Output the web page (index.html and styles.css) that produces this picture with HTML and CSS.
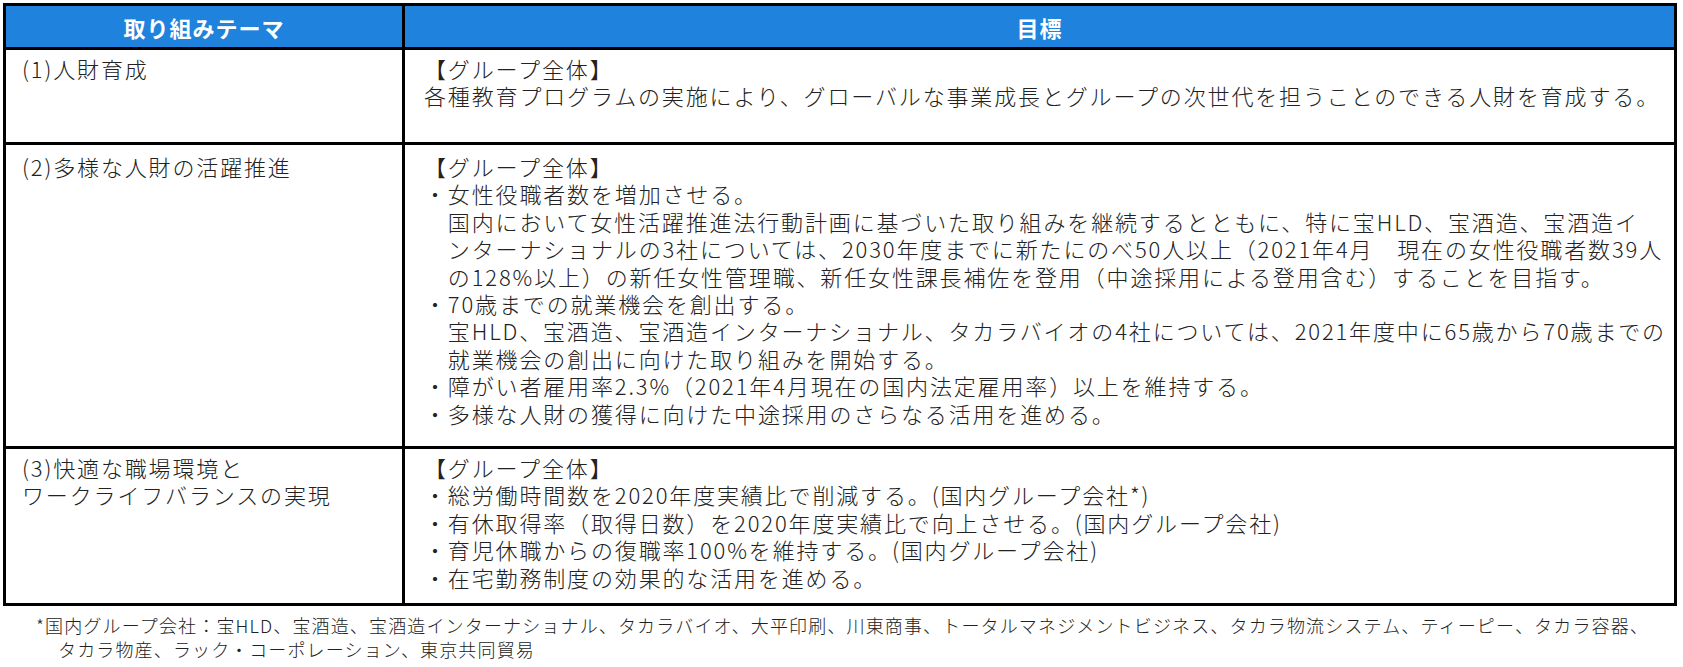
FILE: index.html
```html
<!DOCTYPE html>
<html lang="ja">
<head>
<meta charset="utf-8">
<title>取り組みテーマと目標</title>
<link rel="stylesheet" href="styles.css">
</head>
<body>
<div class="sheet">
  <div class="grid">
    <div class="hd">取り組みテーマ</div>
    <div class="hd">目標</div>

    <div class="cell theme">
      <div class="ln">(1)人財育成</div>
    </div>
    <div class="cell goal">
      <div class="ln">【グループ全体】</div>
      <div class="ln">各種教育プログラムの実施により、グローバルな事業成長とグループの次世代を担うことのできる人財を育成する。</div>
    </div>

    <div class="cell theme row2">
      <div class="ln">(2)多様な人財の活躍推進</div>
    </div>
    <div class="cell goal row2">
      <div class="ln">【グループ全体】</div>
      <div class="ln">・女性役職者数を増加させる。</div>
      <div class="ln">　国内において女性活躍推進法行動計画に基づいた取り組みを継続するとともに、特に宝HLD、宝酒造、宝酒造イ</div>
      <div class="ln">　ンターナショナルの3社については、2030年度までに新たにのべ50人以上（2021年4月　現在の女性役職者数39人</div>
      <div class="ln">　の128%以上）の新任女性管理職、新任女性課長補佐を登用（中途採用による登用含む）することを目指す。</div>
      <div class="ln">・70歳までの就業機会を創出する。</div>
      <div class="ln">　宝HLD、宝酒造、宝酒造インターナショナル、タカラバイオの4社については、2021年度中に65歳から70歳までの</div>
      <div class="ln">　就業機会の創出に向けた取り組みを開始する。</div>
      <div class="ln">・障がい者雇用率2.3%（2021年4月現在の国内法定雇用率）以上を維持する。</div>
      <div class="ln">・多様な人財の獲得に向けた中途採用のさらなる活用を進める。</div>
    </div>

    <div class="cell theme">
      <div class="ln">(3)快適な職場環境と</div>
      <div class="ln">ワークライフバランスの実現</div>
    </div>
    <div class="cell goal">
      <div class="ln">【グループ全体】</div>
      <div class="ln">・総労働時間数を2020年度実績比で削減する。(国内グループ会社*)</div>
      <div class="ln">・有休取得率（取得日数）を2020年度実績比で向上させる。(国内グループ会社)</div>
      <div class="ln">・育児休職からの復職率100%を維持する。(国内グループ会社)</div>
      <div class="ln">・在宅勤務制度の効果的な活用を進める。</div>
    </div>
  </div>

  <div class="note">
    <div class="note-ln">*国内グループ会社：宝HLD、宝酒造、宝酒造インターナショナル、タカラバイオ、大平印刷、川東商事、トータルマネジメントビジネス、タカラ物流システム、ティーピー、タカラ容器、</div>
    <div class="note-ln indent">タカラ物産、ラック・コーポレーション、東京共同貿易</div>
  </div>
</div>
</body>
</html>
```

FILE: styles.css
```css
html, body {
  margin: 0;
  padding: 0;
  background: #ffffff;
}

body {
  font-family: "Noto Sans CJK JP", "Noto Sans", sans-serif;
  color: #222222;
}

.sheet {
  padding: 3px 0 0 3px;
}

.grid {
  display: grid;
  box-sizing: border-box;
  width: 1674px;
  grid-template-columns: 396px 1269px;
  grid-template-rows: 41px 92px 301px 154px;
  gap: 3px;
  padding: 3px;
  background: #000000;
}

.hd {
  background: #1f83dd;
  color: #ffffff;
  font-weight: 700;
  font-size: 22px;
  letter-spacing: 1px;
  display: flex;
  align-items: center;
  justify-content: center;
}

.cell {
  background: #ffffff;
  font-size: 22px;
  line-height: 27.4px;
  letter-spacing: 1.85px;
  font-weight: 300;
  white-space: nowrap;
  overflow: hidden;
}

.theme {
  padding: 5px 0 0 16px;
}

.goal {
  padding: 5px 0 0 19px;
}

.row2 {
  padding-top: 8px;
}

.note {
  margin: 7px 0 0 33px;
  font-size: 18px;
  line-height: 24px;
  letter-spacing: 1.15px;
  font-weight: 300;
  white-space: nowrap;
}

.note-ln.indent {
  padding-left: 22px;
}
```
